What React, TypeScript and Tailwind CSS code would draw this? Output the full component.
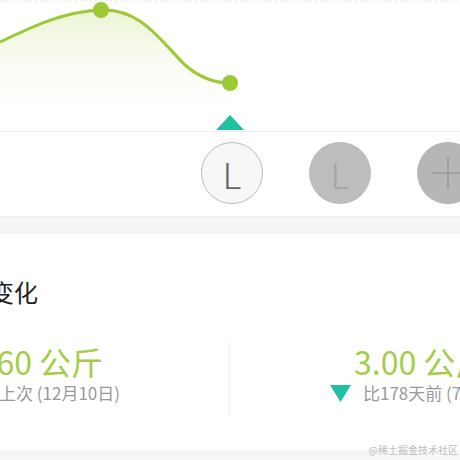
import React from 'react'

const font = { fontFamily: '"Noto Sans CJK SC", "Noto Sans", sans-serif' }

// weight curve, cropped to the visible part of the chart
function Chart() {
  return (
    <svg width="460" height="131" viewBox="0 0 460 131" className="block">
      <defs>
        <linearGradient id="fill" x1="0" y1="0" x2="0" y2="1">
          <stop offset="0%" stopColor="#e8f3cf" stopOpacity="0.9" />
          <stop offset="100%" stopColor="#ffffff" stopOpacity="0" />
        </linearGradient>
      </defs>
      <line x1="0" y1="1" x2="460" y2="1" stroke="#e6e6e6" strokeWidth="1" strokeDasharray="2 3" />
      <path
        d="M0,42 C30,28 60,12 101,10 C140,8 160,40 185,65 C200,78 215,83 230,83 L230,131 L0,131 Z"
        fill="url(#fill)"
      />
      <path
        d="M0,42 C30,28 60,12 101,10 C140,8 160,40 185,65 C200,78 215,83 230,83"
        fill="none"
        stroke="#9dc935"
        strokeWidth="3"
      />
      <circle cx="101" cy="10" r="8" fill="#9dc935" />
      <circle cx="230" cy="83" r="8" fill="#9dc935" />
      <polygon points="216,130 230,115 244,130" fill="#1fbf9f" />
    </svg>
  )
}

export default function App() {
  return (
    <div className="relative w-[460px] h-[460px] overflow-hidden bg-white flex flex-col" style={font}>
      <Chart />

      {/* avatars */}
      <div className="h-[85px] border-t border-[#f0f0f0] flex items-start pt-[10px] gap-[46px] pl-[201px]">
        <div className="w-[62px] h-[62px] shrink-0 rounded-full bg-[#f7f7f7] border border-[#bdbdbd] flex items-center justify-center text-[36px] font-light text-[#666]">
          L
        </div>
        <div className="w-[62px] h-[62px] shrink-0 rounded-full bg-[#bdbdbd] flex items-center justify-center text-[36px] font-light text-[#a6a6a6]">
          L
        </div>
        <div className="w-[62px] h-[62px] shrink-0 rounded-full bg-[#b6b6b6] flex items-center justify-center">
          <svg width="36" height="36" viewBox="0 0 36 36">
            <path d="M18 2v32M2 18h32" stroke="#a0a0a0" strokeWidth="2" />
          </svg>
        </div>
      </div>

      <div className="h-[18px] bg-[#f5f5f5] border-t border-[#eeeeee]" />

      <div className="flex-1 flex flex-col">
        <div className="mt-[42px] ml-[-58px] text-[24px] leading-[32px] text-[#222]">体重变化</div>

        <div className="mt-[33px] flex">
          <div className="w-[230px] shrink-0 border-r border-[#f2f2f2] h-[75px]">
            <div className="ml-[-48px] whitespace-nowrap text-[32px] leading-[40px] text-[#a5cc4b]">
              52.60 公斤
            </div>
            <div className="ml-[-18px] whitespace-nowrap text-[17px] leading-[24px] text-[#9a9a9a]">
              比上次 (12月10日)
            </div>
          </div>
          <div className="flex-1 whitespace-nowrap">
            <div className="ml-[124px] text-[32px] leading-[40px] text-[#a5cc4b]">3.00 公斤</div>
            <div className="ml-[100px] flex items-center gap-[12px] text-[17px] leading-[24px] text-[#9a9a9a]">
              <svg width="21" height="17" viewBox="0 0 21 17" className="shrink-0">
                <polygon points="0,0 21,0 10.5,17" fill="#1fbf9f" />
              </svg>
              <span>比178天前 (7月6日)</span>
            </div>
          </div>
        </div>
      </div>

      <div className="h-[10px] bg-[#f6f6f6]" />

      <div className="absolute right-[2px] bottom-[4px] text-[10px] leading-[12px] text-[#bdbdbd]">
        @稀土掘金技术社区
      </div>
    </div>
  )
}
